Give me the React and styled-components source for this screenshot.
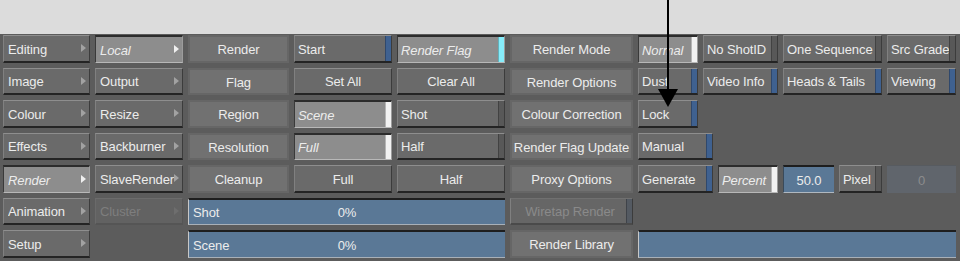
import React from "react";
import styled, { createGlobalStyle, css } from "styled-components";

const GlobalStyle = createGlobalStyle`
  html, body {
    margin: 0;
    padding: 0;
    background: #5c5c5c;
  }
  body {
    font-family: "Liberation Sans", Arial, sans-serif;
  }
`;

const Page = styled.div`
  position: relative;
  width: 960px;
  height: 261px;
  overflow: hidden;
`;

const TopStrip = styled.div`
  height: 34px;
  background: #dcdcdc;
`;

const Panel = styled.div`
  height: 227px;
  box-sizing: border-box;
  padding: 1px 0 0 3px;
  background: #5c5c5c;
  display: grid;
  grid-template-columns: 87px 88px 101px 98px 108px 123px 318px;
  grid-template-rows: repeat(7, 27.5px);
  column-gap: 5px;
  row-gap: 5px;
`;

const raised = css`
  background: #6a6a6a;
  border-top: 1px solid #8e8e8e;
  border-left: 1px solid #808080;
  border-right: 1px solid #3c3c3c;
  border-bottom: 2px solid #242424;
`;

const inset = css`
  background: #8d8d8d;
  border-top: 2px solid #2c2c2c;
  border-left: 1px solid #3a3a3a;
  border-right: 1px solid #9c9c9c;
  border-bottom: 1px solid #b8b8b8;
`;

const base = css`
  box-sizing: border-box;
  display: flex;
  align-items: center;
  min-width: 0;
  height: 100%;
  padding-top: 2px;
  font-size: 13px;
  letter-spacing: -0.1px;
  color: #ececec;
  white-space: nowrap;
  overflow: hidden;
`;

const MenuBtn = styled.div`
  ${base};
  padding-left: 4px;
  padding-right: 2px;
  ${({ $state }) =>
    $state === "active"
      ? inset
      : $state === "disabled"
      ? css`
          background: #626262;
          color: #7e7e7e;
          border-top: 1px solid #6c6c6c;
          border-bottom: 2px solid #555;
          border-left: 1px solid #6a6a6a;
          border-right: 1px solid #555;
        `
      : raised};
  font-style: ${({ $state }) => ($state === "active" ? "italic" : "normal")};
`;

const Label = styled.span`
  flex: 1;
  text-align: ${({ $center }) => ($center ? "center" : "left")};
  overflow: hidden;
`;

const Arrowhead = styled.span`
  width: 0;
  height: 0;
  margin-top: -2px;
  border-top: 4px solid transparent;
  border-bottom: 4px solid transparent;
  border-left: 5px solid ${({ $color }) => $color};
  margin-right: 1px;
`;

const FlatBtn = styled.div`
  ${base};
  justify-content: center;
  background: #717171;
  border: 2px solid #666666;
`;

const ToggleBtn = styled.div`
  ${base};
  padding-left: 3px;
  ${({ $on }) => ($on ? inset : raised)};
  font-style: ${({ $on }) => ($on ? "italic" : "normal")};
  width: ${({ $w }) => ($w ? `${$w}px` : "auto")};
  flex: none;
  ${({ $disabled }) =>
    $disabled &&
    css`
      background: #666;
      color: #8a8a8a;
      border-top-color: #707070;
      border-bottom-color: #4a4a4a;
    `}
`;

const Lamp = styled.span`
  align-self: stretch;
  width: 5px;
  flex: none;
  margin-top: -2px;
  background: ${({ $color }) => $color};
  border-left: 1px solid rgba(0, 0, 0, 0.25);
`;

const PushBtn = styled.div`
  ${base};
  justify-content: center;
  ${raised};
`;

const Field = styled.div`
  ${base};
  justify-content: center;
  flex: none;
  width: ${({ $w }) => $w}px;
  ${({ $tone }) =>
    $tone === "blue"
      ? css`
          background: #5a7896;
          border-top: 2px solid #1e1e1e;
          border-left: 1px solid #3a4a5a;
          border-bottom: 1px solid #b0b8c0;
        `
      : css`
          background: #60656c;
          color: #8c8c8c;
          border-top: 1px solid #575b60;
        `}
`;

const Progress = styled.div`
  ${base};
  grid-column: ${({ $col }) => $col};
  position: relative;
  padding-left: 4px;
  background: #5a7896;
  border-top: 2px solid #1e1e1e;
  border-left: 1px solid #c8c8c8;
  border-bottom: 1px solid #a8b0b8;
`;

const ProgressValue = styled.span`
  position: absolute;
  left: 0;
  right: 0;
  text-align: center;
  pointer-events: none;
`;

const RightRow = styled.div`
  grid-column: 7;
  display: flex;
  gap: 5px;
  min-width: 0;
`;

const Empty = styled.div``;

const Pointer = styled.svg`
  position: absolute;
  left: 656px;
  top: 0;
`;

const BLUE = "#3f6190";
const GREY = "#585858";
const WHITE = "#f2f2f2";
const CYAN = "#86ecfa";

const Menu = ({ children, state }) => (
  <MenuBtn $state={state}>
    <Label>{children}</Label>
    <Arrowhead
      $color={state === "active" ? "#f0f0f0" : state === "disabled" ? "#6e6e6e" : "#a2a2a2"}
    />
  </MenuBtn>
);

const Toggle = ({ children, lamp, on, w, disabled, center }) => (
  <ToggleBtn $on={on} $w={w} $disabled={disabled}>
    <Label $center={center}>{children}</Label>
    <Lamp $color={lamp} />
  </ToggleBtn>
);

const App = () => (
  <>
    <GlobalStyle />
    <Page>
      <TopStrip />
      <Panel>
        {/* row 1 */}
        <Menu>Editing</Menu>
        <Menu state="active">Local</Menu>
        <FlatBtn>Render</FlatBtn>
        <Toggle lamp={BLUE}>Start</Toggle>
        <Toggle lamp={CYAN} on>Render Flag</Toggle>
        <FlatBtn>Render Mode</FlatBtn>
        <RightRow>
          <Toggle lamp={WHITE} on w={60}>Normal</Toggle>
          <Toggle lamp={GREY} w={75}>No ShotID</Toggle>
          <Toggle lamp={GREY} w={99}>One Sequence</Toggle>
          <Toggle lamp={GREY} w={69}>Src Grade</Toggle>
        </RightRow>

        {/* row 2 */}
        <Menu>Image</Menu>
        <Menu>Output</Menu>
        <FlatBtn>Flag</FlatBtn>
        <PushBtn>Set All</PushBtn>
        <PushBtn>Clear All</PushBtn>
        <FlatBtn>Render Options</FlatBtn>
        <RightRow>
          <Toggle lamp={BLUE} w={60}>Dust</Toggle>
          <Toggle lamp={BLUE} w={75}>Video Info</Toggle>
          <Toggle lamp={BLUE} w={99}>Heads &amp; Tails</Toggle>
          <Toggle lamp={BLUE} w={69}>Viewing</Toggle>
        </RightRow>

        {/* row 3 */}
        <Menu>Colour</Menu>
        <Menu>Resize</Menu>
        <FlatBtn>Region</FlatBtn>
        <Toggle lamp={WHITE} on>Scene</Toggle>
        <Toggle lamp={GREY}>Shot</Toggle>
        <FlatBtn>Colour Correction</FlatBtn>
        <RightRow>
          <Toggle lamp={BLUE} w={60}>Lock</Toggle>
        </RightRow>

        {/* row 4 */}
        <Menu>Effects</Menu>
        <Menu>Backburner</Menu>
        <FlatBtn>Resolution</FlatBtn>
        <Toggle lamp={WHITE} on>Full</Toggle>
        <Toggle lamp={GREY}>Half</Toggle>
        <FlatBtn>Render Flag Update</FlatBtn>
        <RightRow>
          <Toggle lamp={BLUE} w={75}>Manual</Toggle>
        </RightRow>

        {/* row 5 */}
        <Menu state="active">Render</Menu>
        <Menu>SlaveRender</Menu>
        <FlatBtn>Cleanup</FlatBtn>
        <PushBtn>Full</PushBtn>
        <PushBtn>Half</PushBtn>
        <FlatBtn>Proxy Options</FlatBtn>
        <RightRow>
          <Toggle lamp={BLUE} w={75}>Generate</Toggle>
          <Toggle lamp={WHITE} on w={60}>Percent</Toggle>
          <Field $tone="blue" $w={51}>50.0</Field>
          <Toggle lamp={GREY} w={43}>Pixel</Toggle>
          <Field $w={69}>0</Field>
        </RightRow>

        {/* row 6 */}
        <Menu>Animation</Menu>
        <Menu state="disabled">Cluster</Menu>
        <Progress $col="3 / 6">
          Shot
          <ProgressValue>0%</ProgressValue>
        </Progress>
        <Toggle lamp="#545a62" disabled center>Wiretap Render</Toggle>
        <Empty />

        {/* row 7 */}
        <Menu>Setup</Menu>
        <Empty />
        <Progress $col="3 / 6">
          Scene
          <ProgressValue>0%</ProgressValue>
        </Progress>
        <FlatBtn>Render Library</FlatBtn>
        <Progress $col="7" />
      </Panel>
      <Pointer width="24" height="110" viewBox="0 0 24 110">
        <line x1="12" y1="0" x2="12" y2="92" stroke="#000" strokeWidth="2" />
        <polygon points="2,89 22,89 12,107" fill="#000" />
      </Pointer>
    </Page>
  </>
);

export default App;
